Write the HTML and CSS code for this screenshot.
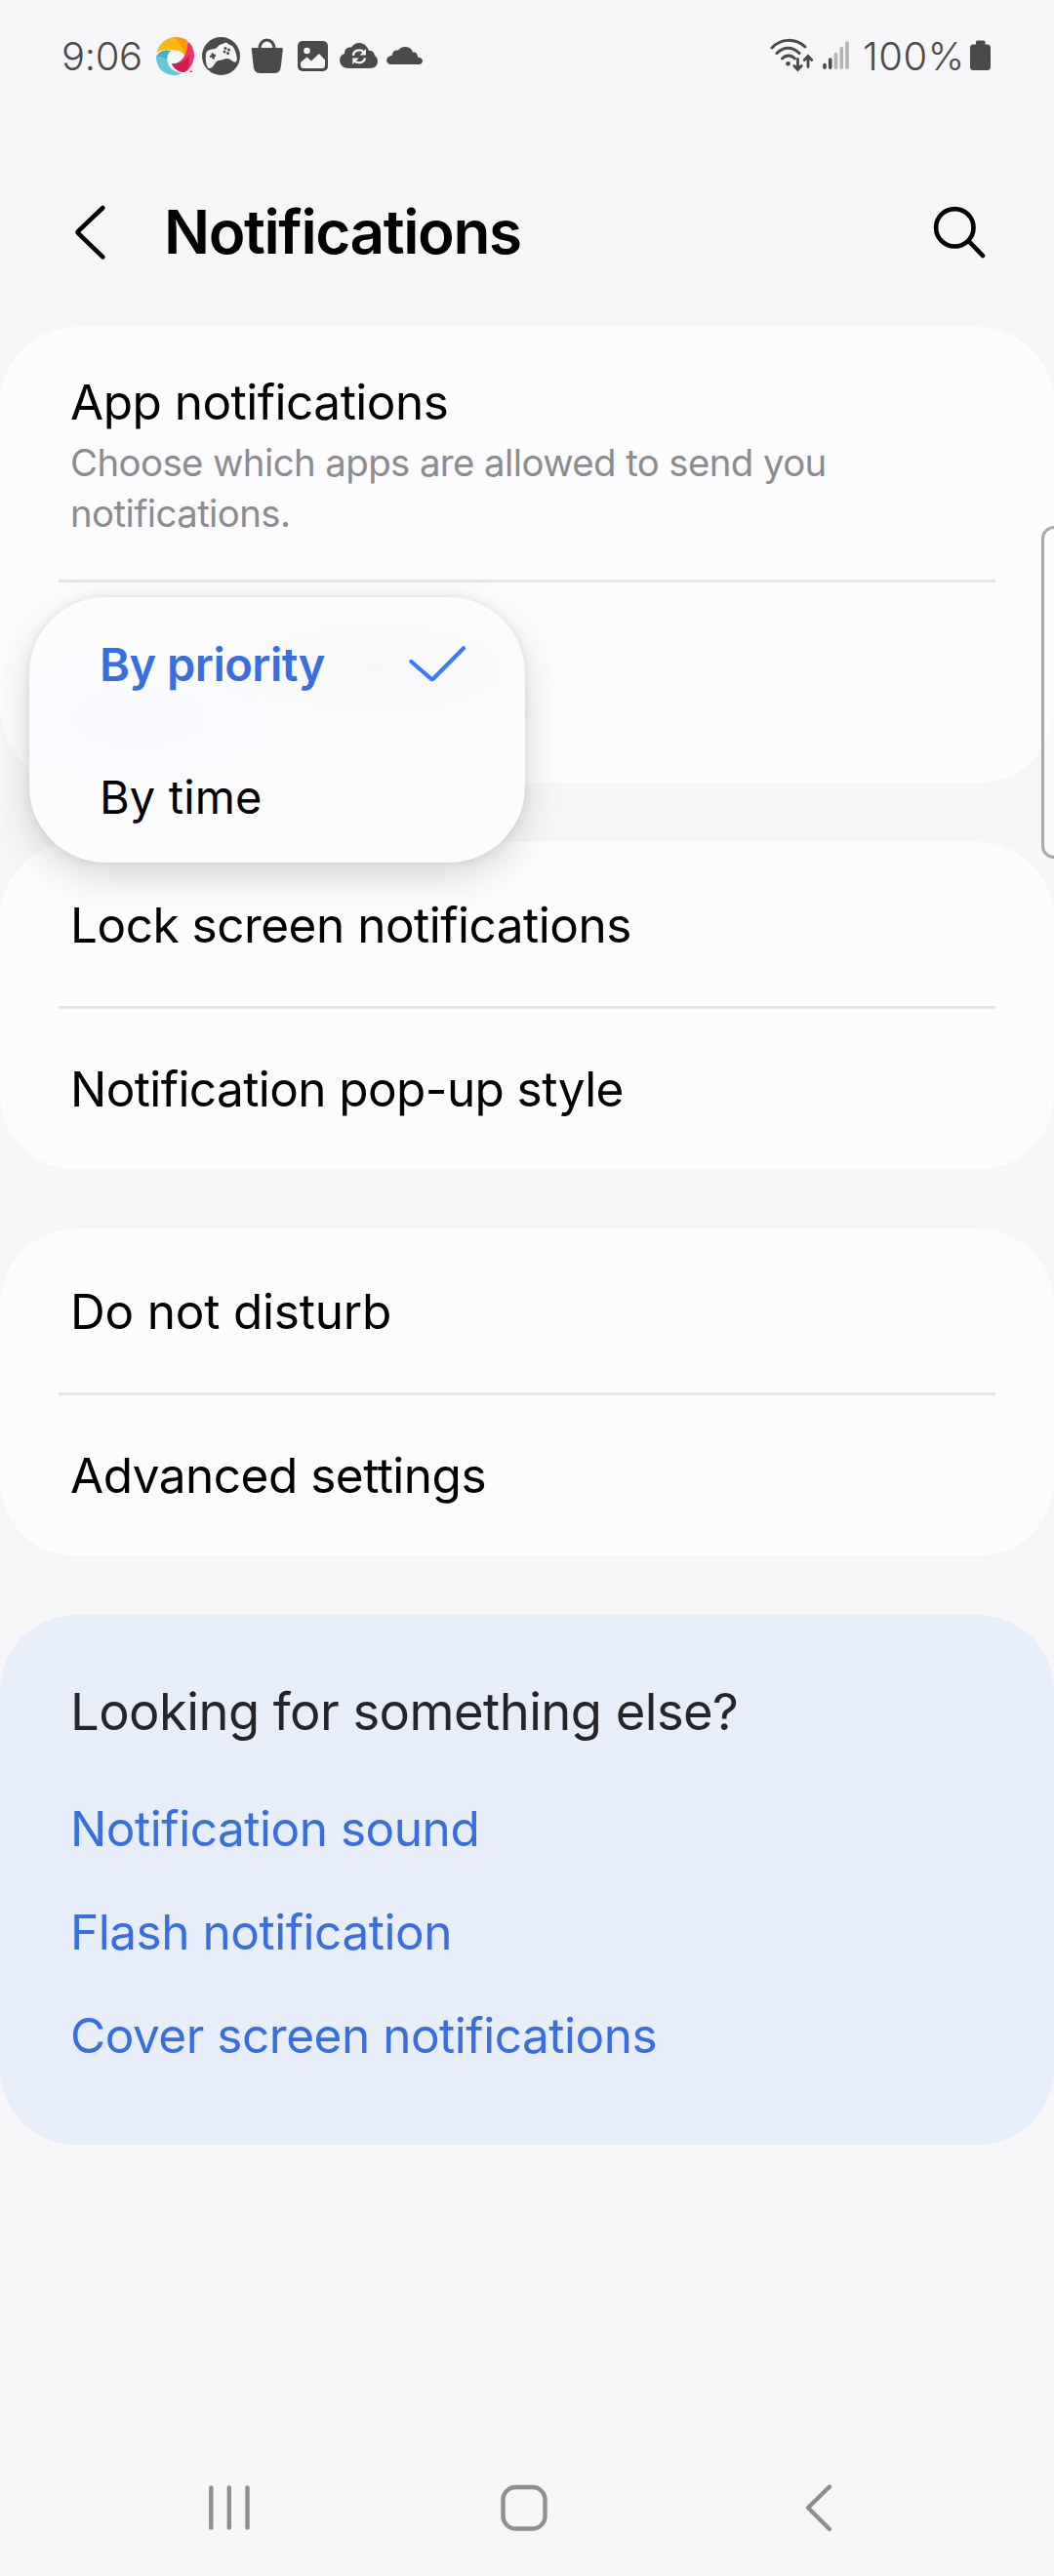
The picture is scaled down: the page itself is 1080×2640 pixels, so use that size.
FILE: index.html
```html
<!DOCTYPE html>
<html lang="en">
<head>
<meta charset="utf-8">
<title>Notifications</title>
<link rel="stylesheet" href="styles.css">
</head>
<body>
<div class="screen">
  <div class="status-bar">
    <span class="clock">9:06</span>
    <div class="status-icons">
      <svg width="40" height="40" viewBox="0 0 40 40">
        <path fill="#fdb614" d="M.5 16C3 6 11 0 20 0c5 0 8 1 11.500 3 1 5 .5 10-2 15.500C25 14 21 12.500 15 13 9 12.500 4 13 .5 16z"/>
        <path fill="#fb9a04" d="M18 0c6 0 10 1 13.500 3 1 5 .5 10-2 15.500C28 11 24 5 18 0z"/>
        <path fill="#f0316c" d="M32.500 4.500C37 8 39 13 39 20c-1 6-3 10-6 13-2 2-4 3-6 3-5-1-9-4-11-8.500 9 0 16-8 16.500-23z"/>
        <path fill="#cf1c51" d="M16 27.500c8 0 14-3 18-9l-1 14.500c-2 2-4 3-6 3-5-1-9-4-11-8.500z"/>
        <path fill="#66c6dc" d="M0 20c4-6 9-7.500 15-6-4 3-5 9-2 15 3 5 8 7 13 8-2 1.500-4 2-7 2C7 39 0 31 0 20z"/>
        <path fill="#43aec4" d="M0 20c4-6 9-7.500 15-6-3 2-4 6-4 9-4-3-7-4-11-3z"/>
        <path fill="#f0316c" d="M34.500 34.500h2.500v1.500h-2.500z"/>
      </svg>
      <svg class="gap-a" width="39" height="40" viewBox="0 0 39 40">
        <circle cx="19.500" cy="19.500" r="19.500" fill="#4a4a4b"/>
        <path fill="#f6f6f8" d="M4 17c1-3 3-4 6-4.500 3-.3 5-1 6.500-3C18 7.500 20 7.500 23 6c2-.6 3 0 4.500 1.500C30 8.500 32 9 33 12c1.500 3 2.500 6 2.800 10 .2 4-2.500 4.500-5 2.500-3-3-6-3-9-1.500-3 1-6 0-8.500 4-2 3-3.500 5-6 5-3-.5-4-9-3.300-15z"/>
        <path stroke="#4a4a4b" stroke-width="2.400" d="M10.500 16.500l1.500 6M8 20.200l6-1.500"/>
        <circle cx="24" cy="11.500" r="1.500" fill="#4a4a4b"/><circle cx="27.500" cy="13" r="1.500" fill="#4a4a4b"/><circle cx="23" cy="15" r="1.500" fill="#4a4a4b"/><circle cx="26.500" cy="16.500" r="1.500" fill="#4a4a4b"/>
      </svg>
      <svg class="gap-b" width="34" height="40" viewBox="0 0 34 40">
        <path fill="#4a4a4b" d="M1.500 11h30q1.500 0 1.300 1.500l-2 18Q30 37 25 37H9q-5.500 0-6.200-6.500l-2-18Q.5 11 1.500 11z"/>
        <path fill="none" stroke="#4a4a4b" stroke-width="3.200" d="M9 12C9 0 24 0 24 12"/>
      </svg>
      <svg class="gap-c" width="31" height="40" viewBox="0 0 31 40">
        <rect y="4" width="31" height="31" rx="5" fill="#4a4a4b"/>
        <circle cx="9.500" cy="14" r="3.300" fill="#f6f6f8"/>
        <path fill="#f6f6f8" d="M3 26l6.500-5.500 4.500 4L22 17l6 6.500V29q0 3-3 3H6q-3 0-3-3z"/>
      </svg>
      <svg class="gap-d" width="39" height="40" viewBox="0 0 39 40">
        <path fill="#4a4a4b" d="M9 32C-1 32-3 19 5 17 5 12 8 10 12 10.500 15 5 26 3 30 14c5 0 5 2 6 5 5 3 4 13-5 13z"/>
        <path fill="none" stroke="#f6f6f8" stroke-width="2.200" d="M14 19c0-6 8-7 11-3.500M26 21.500c-1 5.500-8 6-11 2.500"/>
        <path fill="#f6f6f8" d="M27 12v6.500h-6.500zM13.300 28v-6.500h6.500z"/>
      </svg>
      <svg class="gap-e" width="38" height="40" viewBox="0 0 38 40">
        <path fill="#4a4a4b" d="M5 28c-7 0-6-9 1-9 0-5 3-6 6-5.500 4-6 14-4 15 2 4 0 5 2 5 5 7 .5 6 7.500 1 7.500z"/>
      </svg>
    </div>
    <div class="status-right">
      <svg width="44" height="40" viewBox="0 0 44 40">
        <g fill="none" stroke="#4a4a4b" stroke-width="2.800" stroke-linecap="round">
          <path d="M2 11c9-10 24-10 34-1M7 16.500c7-7 16-7 23 0M12.500 22c4-4 9-4 13 0" stroke-width="3"/>
          <path d="M28.500 22.500v10M24.800 29.500l3.700 4 3.700-4M39 30.500v-11M35.200 23.500l3.800-4 3.800 4"/>
        </g>
        <circle cx="18.500" cy="27.300" r="2.300" fill="#4a4a4b"/>
      </svg>
      <svg class="gap-signal" width="28" height="40" viewBox="0 0 28 40">
        <g stroke-width="3.600" stroke-linecap="round">
          <path stroke="#4a4a4b" d="M2 28.500v2.800M7.700 23v8.300"/>
          <path stroke="#b3b3b4" d="M13.500 17.500v13.800M19.300 11.500v19.800M25 6v25.300"/>
        </g>
      </svg>
      <span class="percent">100%</span>
      <svg width="21" height="40" viewBox="0 0 21 40">
        <rect y="7.500" width="21" height="26.500" rx="3.500" fill="#4a4a4b"/><rect x="6" y="3.500" width="9.500" height="7" rx="1.500" fill="#4a4a4b"/>
      </svg>
    </div>
  </div>

  <header class="header">
    <svg width="32" height="60" viewBox="0 0 32 60" fill="none" stroke="#000" stroke-width="4.600" stroke-linecap="round" stroke-linejoin="round"><path d="M28.300 5L3.200 28.800q-1.200 1.200 0 2.400L28.300 55.300"/></svg>
    <h1>Notifications</h1>
    <svg class="search" width="56" height="60" viewBox="0 0 56 60" fill="none" stroke="#000" stroke-width="4.600" stroke-linecap="round"><circle cx="22.300" cy="25.300" r="19.200"/><path d="M37 39.500L51 54"/></svg>
  </header>

  <main class="cards">
    <section class="card">
      <div class="row row-app">
        <div class="label label-app">App notifications</div>
        <div class="desc">Choose which apps are allowed to send you<br>notifications.</div>
      </div>
      <div class="row row-sort">
        <div class="menu">
          <div class="option selected"><span>By priority</span>
            <svg width="60" height="40" viewBox="0 0 60 40" fill="none" stroke="#387aff" stroke-width="4.200" stroke-linecap="round" stroke-linejoin="round"><path d="M3.300 18L23.500 35.500q1.300 1 2.600 0L57 4.300"/></svg>
          </div>
          <div class="option"><span class="by-time">By time</span></div>
        </div>
      </div>
    </section>
    <section class="card">
      <div class="row"><span class="label">Lock screen notifications</span></div>
      <div class="row"><span class="label label-tight">Notification pop-up style</span></div>
    </section>
    <section class="card">
      <div class="row"><span class="label label-wide">Do not disturb</span></div>
      <div class="row"><span class="label">Advanced settings</span></div>
    </section>
    <section class="card related">
      <h2>Looking for something else?</h2>
      <a>Notification sound</a>
      <a>Flash notification</a>
      <a>Cover screen notifications</a>
    </section>
  </main>

  <nav class="nav">
    <svg width="46" height="54" viewBox="0 0 46 54" stroke="#8f8f90" stroke-width="4.400" stroke-linecap="round"><path d="M4.300 6.500v41M22.800 6.500v41M41.500 6.500v41"/></svg>
    <svg class="nav-home" width="54" height="54" viewBox="0 0 54 54" fill="none" stroke="#8f8f90" stroke-width="4.400"><rect x="5.500" y="6" width="43" height="42.500" rx="13"/></svg>
    <svg class="nav-back" width="36" height="54" viewBox="0 0 36 54" fill="none" stroke="#8f8f90" stroke-width="4.400" stroke-linecap="round" stroke-linejoin="round"><path d="M31 5.500L9 27l22 22"/></svg>
  </nav>
  <div class="edge-handle"></div>
</div>
</body>
</html>
```
FILE: styles.css
```css
* { box-sizing: border-box; margin: 0; padding: 0; }
body { background: #f6f6f8; font-family: Inter, "Liberation Sans", sans-serif; color: #000; }
svg { display: block; flex: none; }

.screen { position: relative; width: 1080px; height: 2640px; overflow: hidden; display: flex; flex-direction: column; background: #f6f6f8; }

.status-bar { height: 116px; display: flex; align-items: center; padding: 0 65px 2px 63px; color: #4a4a4b; font-size: 40px; font-weight: 300; white-space: nowrap; }
.status-icons, .status-right svg { margin-top: 1px; }
.clock { width: 97px; letter-spacing: -0.35px; }
.status-icons { display: flex; }
.gap-a { margin-left: 7px; }
.gap-b { margin-left: 11px; }
.gap-c { margin-left: 14px; }
.gap-d { margin-left: 12px; }
.gap-e { margin-left: 9px; }
.status-right { display: flex; align-items: center; margin-left: auto; }
.gap-signal { margin-left: 10px; }
.percent { width: 110px; margin-left: 13px; letter-spacing: 0.5px; }

.header { height: 219px; display: flex; align-items: center; padding: 25px 68px 0 77px; }
h1 { margin-left: 59px; font-size: 62px; font-weight: 600; line-height: 76px; letter-spacing: -1.4px; }
.search { margin-left: auto; }

.cards { display: flex; flex-direction: column; gap: 60px; }
.card { background: #fcfcfe; border-radius: 78px; }
.row { position: relative; height: 168px; padding: 2px 72px 0; display: flex; align-items: center; }
.row + .row::before { content: ""; position: absolute; top: 0; left: 60px; right: 60px; height: 3px; background: #e4e4e6; }
.label { font-size: 49.5px; line-height: 66px; letter-spacing: -0.5px; white-space: nowrap; }
.label-tight { letter-spacing: -0.6px; }
.label-wide { letter-spacing: -0.2px; }
.row-app { height: 259px; flex-direction: column; align-items: flex-start; padding-top: 44px; }
.desc { margin-top: 3px; font-size: 38.4px; line-height: 52px; letter-spacing: -0.6px; color: #8c8c8e; white-space: nowrap; }
.row-sort { height: 209px; }

.menu { position: absolute; z-index: 1; top: 18px; left: 30px; width: 508px; height: 272px; border-radius: 78px;
  background: radial-gradient(ellipse 200px 70px at 70% 27%, #f7f7f9, #f7f7f900), radial-gradient(ellipse 170px 80px at 22% 45%, #f7f9ff, #f7f9ff00), #fcfcfe;
  box-shadow: 0 14px 40px rgba(0, 0, 0, 0.15), 0 0 8px rgba(0, 0, 0, 0.09); }
.option { height: 136px; display: flex; align-items: center; justify-content: space-between; padding: 0 60px 0 72px; font-size: 47px; }
.selected { color: #376fe0; font-weight: 600; letter-spacing: -0.5px; }
.by-time { letter-spacing: 0.1px; }

.related { height: 543px; padding: 64px 72px 0; background: #e7edf9; }
h2 { font-size: 52.5px; font-weight: 400; line-height: 70px; letter-spacing: -0.55px; color: #252529; margin-bottom: 32px; }
.related a { display: block; font-size: 49.5px; line-height: 106px; letter-spacing: -0.47px; color: #376fe0; }

.nav { margin-top: auto; height: 140px; display: flex; align-items: center; padding-left: 212px; }
.nav-home { margin-left: 252px; }
.nav-back { margin-left: 255px; }
.edge-handle { position: absolute; top: 539px; right: -30px; width: 43px; height: 341px; border: 3px solid #aaaaab; border-radius: 13px; background: rgba(252, 252, 252, 0.6); }
```
